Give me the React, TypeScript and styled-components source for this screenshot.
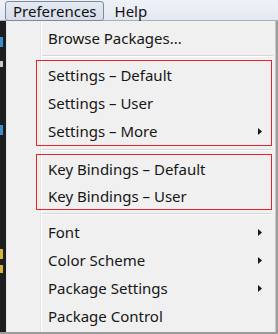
import React from "react";
import styled, { createGlobalStyle } from "styled-components";

const Global = createGlobalStyle`
  html, body { margin: 0; padding: 0; background: #9c9c9c; }
  body { width: 278px; height: 334px; overflow: hidden; font-family: "Noto Sans", "Open Sans", sans-serif; }
`;

const Page = styled.div`
  width: 278px;
  height: 334px;
  display: grid;
  grid-template-rows: 21px 311px 2px;
  background: #9c9c9c;
`;

const MenuBar = styled.div`
  display: flex;
  align-items: center;
  gap: 3px;
  padding-left: 5px;
  background: linear-gradient(#eef2f8, #e3e8f0);
  border-bottom: 1px solid #a7afba;
  box-sizing: border-box;
  height: 21px;
`;

const BarItem = styled.div<{ $open?: boolean }>`
  height: 20px;
  box-sizing: border-box;
  padding: 0 6px 0 7px;
  display: flex;
  align-items: center;
  font-size: 15px;
  color: #111;
  border: 1px solid ${(p) => (p.$open ? "#7f8a99" : "transparent")};
  border-radius: 3px;
  background: ${(p) => (p.$open ? "linear-gradient(#e4eaf2, #d6dde8)" : "transparent")};
  margin-top: 1px;
`;

const Body = styled.div`
  display: flex;
`;

const EditorStrip = styled.div`
  width: 6px;
  background:
    linear-gradient(to bottom,
      transparent 0 16px, #3b8fc8 16px 26px, transparent 26px 40px,
      #c9c9c9 40px 46px, transparent 46px 104px, #3b8fc8 104px 114px,
      transparent 114px 228px, #d9b33a 228px 238px, transparent 238px 244px,
      #d9b33a 244px 252px, transparent 252px) no-repeat 0 0 / 3px 100%,
    #1c1e1f;
`;

const Menu = styled.div`
  width: 270px;
  box-sizing: border-box;
  border-left: 1px solid #e6e6e6;
  border-right: 1px solid #c9c9c9;
  padding: 3px 0 0 0;
  background:
    linear-gradient(to right, transparent 33px, #e2e3e3 33px 34px, #ffffff 34px 35px, transparent 35px),
    #f0f0f0;
  display: flex;
  flex-direction: column;
`;

const Group = styled.div`
  margin: 0 3px 0 29px;
  border: 1px solid #e0252b;
  display: flex;
  flex-direction: column;
`;

const Item = styled.div<{ $inset?: boolean; $h?: number }>`
  height: ${(p) => p.$h ?? 28}px;
  display: flex;
  align-items: center;
  justify-content: space-between;
  padding-left: ${(p) => (p.$inset ? 11 : 41)}px;
  padding-right: ${(p) => (p.$inset ? 9 : 13)}px;
  font-size: 15px;
  color: #161616;
  white-space: nowrap;
`;

const Separator = styled.div<{ $top?: number; $bottom?: number }>`
  height: 1px;
  margin: ${(p) => p.$top ?? 3}px 2px ${(p) => p.$bottom ?? 3}px 35px;
  background: #d7d7d7;
  border-bottom: 1px solid #ffffff;
`;

const Arrow = () => (
  <svg width="4" height="7" viewBox="0 0 4 7">
    <path d="M0 0 L4 3.5 L0 7 Z" fill="#1a1a1a" />
  </svg>
);

export default function App() {
  return (
    <Page>
      <Global />
      <MenuBar>
        <BarItem $open>Preferences</BarItem>
        <BarItem>Help</BarItem>
      </MenuBar>
      <Body>
        <EditorStrip />
        <Menu>
          <Item>Browse Packages...</Item>
          <Separator />
          <Group>
            <Item $inset>Settings – Default</Item>
            <Item $inset>Settings – User</Item>
            <Item $inset>
              Settings – More <Arrow />
            </Item>
          </Group>
          <Separator />
          <Group>
            <Item $inset $h={27}>Key Bindings – Default</Item>
            <Item $inset $h={27}>Key Bindings – User</Item>
          </Group>
          <Separator />
          <Item>
            Font <Arrow />
          </Item>
          <Item>
            Color Scheme <Arrow />
          </Item>
          <Item>
            Package Settings <Arrow />
          </Item>
          <Item>Package Control</Item>
        </Menu>
      </Body>
    </Page>
  );
}
